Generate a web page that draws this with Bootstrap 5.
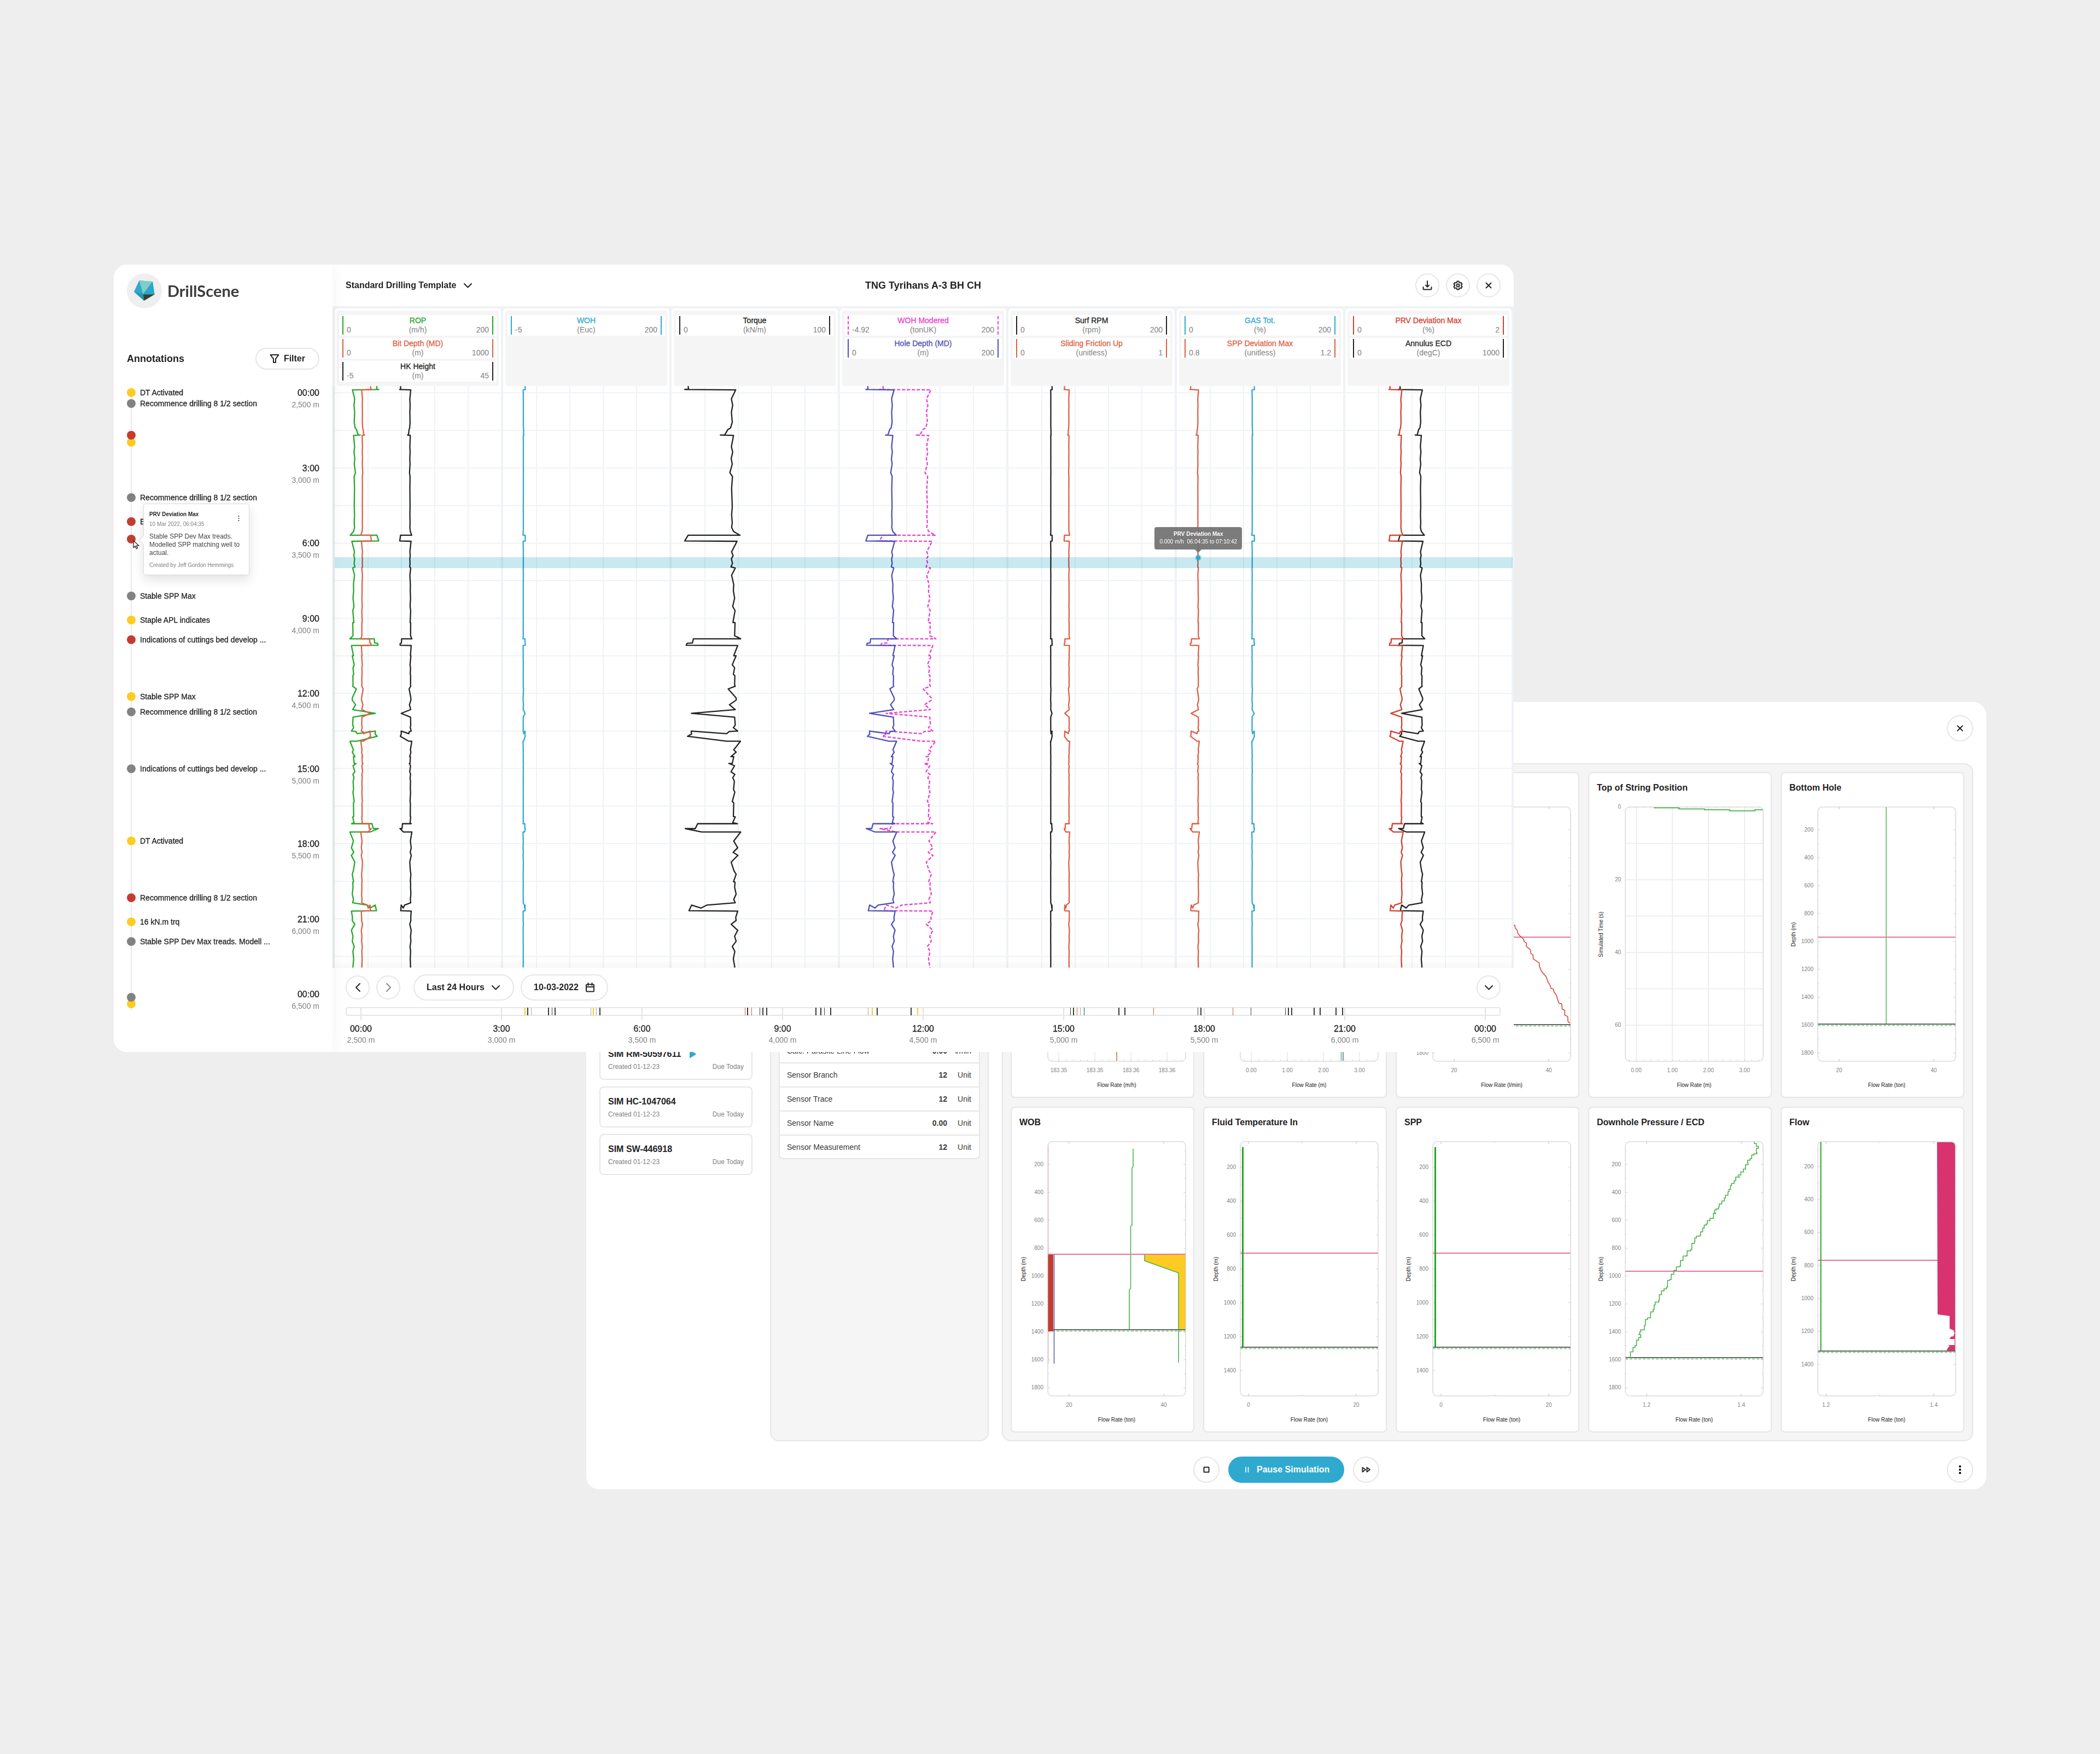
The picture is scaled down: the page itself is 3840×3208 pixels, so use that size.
<!DOCTYPE html>
<html lang="en">
<head>
<meta charset="utf-8">
<meta name="viewport" content="width=device-width, initial-scale=1">
<title>DrillScene</title>
<link href="https://cdn.jsdelivr.net/npm/bootstrap@5.3.0/dist/css/bootstrap.min.css" rel="stylesheet">
<style>
  :root { --ink:#222; --soft:#7f7f7f; --rule:#e6e6e6; --mesh:#eff3f6; --panel:#f5f5f5; --aqua:#30a9ce; --amber:#fdcb22; --brick:#c63b2f; }
  body { background:#eee; color:var(--ink); font-family:"Liberation Sans",Arial,sans-serif; font-size:14px; line-height:20px; }
  .desk { display:grid; grid-template-columns:208fr 864fr 1696fr 864fr 208fr; grid-template-rows:484px minmax(800px,auto) minmax(640px,auto) minmax(800px,auto) 484px; }
  .win { background:#fff; border-radius:24px; min-width:0; }
  .win-log { grid-area:2 / 2 / 4 / 4; z-index:2; overflow:hidden; }
  .win-sim { grid-area:3 / 3 / 5 / 5; z-index:1; padding:24px 24px 12px; }
  h1, h2, h3, p, ul { margin:0; padding:0; }
  .t16 { font-size:16px; line-height:22px; }
  .t18 { font-size:18px; line-height:24px; }
  .t12 { font-size:12px; line-height:15px; }
  .t10 { font-size:10px; line-height:14px; }
  .mid { -webkit-text-stroke:.3px currentColor; }
  .soft { color:var(--soft); }
  .round { width:44px; height:44px; padding:0; border:2px solid var(--rule); border-radius:50%; background:#fff; color:var(--ink); display:flex; align-items:center; justify-content:center; flex:none; }
  .round.big { width:48px; height:48px; }
  .round.off { color:#8c8c8c; }
  svg { display:block; flex:none; }
  .ln { fill:none; stroke:currentColor; stroke-width:2; stroke-linejoin:round; stroke-linecap:round; }

  /* sidebar */
  .side { width:400px; flex:none; padding:16px 24px 74px; z-index:2; background:#fff; box-shadow:0 0 24px rgba(0,0,0,.06); }
  .brand { font-family:Lato,sans-serif; font-weight:700; font-size:29px; line-height:36px; color:#3c3c3c; }
  .brand-row { margin-bottom:72px; gap:10px; }
  .side-head { margin-bottom:32px; }
  .pill { border:2px solid var(--rule); border-radius:24px; background:#fff; font-weight:700; color:var(--ink); }
  .filter-btn { height:40px; padding:0 24px; }
  .rail { flex:1 1 auto; }
  .rail::before { content:""; position:absolute; left:7px; top:0; bottom:2px; width:2px; background:#e7ebec; }
  .notes { list-style:none; }
  .notes li { position:absolute; left:0; display:flex; align-items:center; gap:8px; transform:translateY(-50%); white-space:nowrap; }
  .dot { width:16px; height:16px; border-radius:50%; flex:none; }
  .dot.y { background:var(--amber); } .dot.g { background:#828282; } .dot.r { background:var(--brick); }
  .note-card { position:absolute; left:30px; width:194px; height:131px; background:#fff; border:1px solid #d9d9d9; border-radius:4px; box-shadow:0 8px 20px rgba(0,0,0,.12); padding:12px 10px; z-index:3; }
  .note-card::before { content:""; position:absolute; left:-7px; top:60px; width:12px; height:12px; background:#fff; border-left:1px solid #d9d9d9; border-bottom:1px solid #d9d9d9; transform:rotate(45deg); }
  .note-card p { color:#444; }
  .note-card .dots { position:absolute; right:13px; top:16px; border:0; background:none; padding:4px; color:#555; }
  .cursor { position:absolute; left:11px; z-index:4; }

  /* log window */
  .log-col { min-width:0; }
  .log-head { height:76px; padding:0 24px; display:grid; grid-template-columns:1fr auto 1fr; align-items:center; }
  .tools { gap:12px; }
  .pick { position:relative; display:inline-flex; align-items:center; }
  .pick select { appearance:none; border:0; background:none; font-weight:700; font-size:16px; line-height:22px; color:var(--ink); padding:0 28px 0 0; outline:0; }
  .pick svg { position:absolute; right:0; pointer-events:none; }
  .tracks { background:var(--mesh); padding:4px 4px 0; gap:4px; }
  .track { flex:1 1 0; background:#fff; border-radius:6px 6px 0 0; padding:4px 4px 0; }
  .track-in { background:var(--panel); border-radius:4px; min-height:138px; padding:8px 4px; display:flex; flex-direction:column; gap:4px; }
  .curve { background:#fff; border-radius:2px; padding:2px 6px; }
  .curve-in { border:0 solid; border-width:0 2px; padding:0 6px; line-height:17px; text-align:center; }
  .curve-in.dash { border-style:dashed; }
  .curve-in span { flex:1 1 0; color:var(--soft); }
  .plot svg, .gauge svg { width:100%; height:auto; }
  .tip { position:absolute; left:73.3%; top:258px; width:160px; height:41px; transform:translateX(-50%); background:rgba(112,112,112,.92); border-radius:4px; color:#fff; text-align:center; padding:6px 0; white-space:pre; }
  .tip::after { content:""; position:absolute; left:74px; top:41px; border:6px solid transparent; border-top-color:#7a7a7a; border-bottom:0; }
  .ctl { flex:1 1 auto; padding:12px 24px; background:#fff; box-shadow:0 -4px 16px rgba(0,0,0,.05); z-index:1; }
  .ctl-row { gap:12px; }
  .ctl .pill { height:48px; padding:0 22px; }
  .ctl .pick.pill { width:184px; margin-left:12px; }
  .ctl .pick.pill svg { right:24px; }
  .day { width:86px; border:0; padding:0; font-weight:700; color:var(--ink); outline:0; }
  .strip { height:24px; margin-top:12px; }
  .strip-box { height:16px; border:2px solid var(--rule); border-radius:4px; position:absolute; left:0; right:0; top:0; }
  .ev { position:absolute; top:1px; width:2px; height:14px; }
  .ev.thin { width:1px; }
  .hour { width:56px; text-align:center; white-space:nowrap; }
  .hour i { display:block; width:2px; height:24px; background:#e1e3e4; margin:auto; }
  .hours { margin-top:6px; }

  /* simulation window */
  .sim-head { height:88px; }
  .sims { width:280px; flex:none; padding-top:504px; gap:12px; margin-right:32px; }
  .sim-card { border:2px solid var(--rule); border-radius:8px; padding:15px 14px 14px; }
  .sim-meta { padding-top:5px; }
  .box { background:var(--panel); border:2px solid var(--rule); border-radius:16px; }
  .sensors { width:400px; flex:none; padding:500px 14px 0; margin-right:24px; }
  .sensor-wrap { background:#fff; border:2px solid var(--rule); border-radius:8px; overflow:hidden; }
  .sensor-wrap table { width:100%; color:#3a3a3a; }
  .sensor-wrap td { height:44px; padding:0; border-bottom:2px solid var(--rule); }
  .sensor-wrap tr:last-child td { border-bottom:0; height:42px; }
  .sensor-wrap td:first-child { padding-left:13px; }
  .sensor-wrap td:nth-child(2) { font-weight:700; text-align:right; }
  .sensor-wrap td:last-child { width:58px; text-align:right; padding-right:14px; }
  .gauges { flex:1 1 auto; padding:14px; display:grid; grid-template-columns:repeat(5,1fr); gap:16px; }
  .gauge { background:#fff; border:2px solid var(--rule); border-radius:8px; min-width:0; }
  .gauge-top { height:42px; padding:15px 14px 0; font-weight:700; font-size:16px; line-height:24px; }
  .gauge text { font-size:10px; fill:var(--soft); }
  .gauge text.cap { fill:var(--ink); }
  .run { padding-top:28px; display:grid; grid-template-columns:1fr auto 1fr; align-items:center; }
  .pause { height:48px; min-width:212px; border:0; border-radius:24px; background:var(--aqua); color:#fff; font-weight:700; padding:0 24px; }
</style>
</head>
<body>
<main class="desk">

  <section class="win win-log d-flex" aria-label="Drilling log">
    <aside class="side d-flex flex-column position-relative">
      <div class="brand-row d-flex align-items-center">
        <svg width="64" height="64" viewBox="0 0 64 64">
          <circle cx="32" cy="32" r="32" fill="#efefef"/>
          <path d="M22.6 13 47 15l3.6 23.4L31.3 50 13 33.4z" fill="#30a9ce"/>
          <path d="M22.6 13 47 15 29.7 38z" fill="#80ccc6"/>
          <path d="M47 15 50.6 38.4 29.7 38z" fill="#2ba6cc"/>
          <path d="M13 33.4 29.7 38 31.3 50z" fill="#2296bb"/>
          <path d="M29.7 38.4H50.4L31.3 50z" fill="#3b3b3b"/>
          <path d="M31.2 49.6 29.7 38.4H50.4" fill="none" stroke="#2c8f3a"/>
        </svg>
        <span class="brand">DrillScene</span>
      </div>
      <div class="side-head d-flex align-items-center justify-content-between">
        <h2 class="t18 fw-bold">Annotations</h2>
        <button class="pill filter-btn t16 d-flex align-items-center gap-2" type="button">
          <svg width="18" height="18" viewBox="0 0 18 18"><path class="ln" d="M1.5 2h15L11 9.4V16H7V9.4z"/></svg>Filter
        </button>
      </div>
      <div class="rail position-relative">
        <ul class="notes" id="notes"></ul>
        <div class="d-flex flex-column justify-content-between h-100 text-end" id="railTimes"></div>
        <div class="note-card" style="top:18.65%">
          <div class="t10 fw-bold mb-0">PRV Deviation Max</div>
          <div class="t10 soft mt-1 mb-2">10 Mar 2022, 06:04:35</div>
          <p class="t12">Stable SPP Dev Max treads.<br>Modelled SPP matching well to<br>actual.</p>
          <div class="t10 soft mt-2">Created by Jeff Gordon Hemmings</div>
          <button class="dots" type="button" aria-label="More"><svg width="3" height="12" viewBox="0 0 3 12" fill="currentColor"><path d="M.5 1h2v2h-2zM.5 5h2v2h-2zM.5 9h2v2h-2z"/></svg></button>
        </div>
        <svg class="cursor" style="top:24.5%" width="13" height="17" viewBox="0 0 13 17"><path d="M1 1v12.500l3.200-2.600 2.200 4.600 2.200-1-2.200-4.400 4.400-.3z" fill="#fff" stroke="#333" stroke-width="1.400"/></svg>
      </div>
    </aside>

    <div class="log-col flex-fill d-flex flex-column">
      <header class="log-head">
        <div><span class="pick">
          <select id="tpl" aria-label="Template"><option>Standard Drilling Template</option></select>
          <svg width="15" height="9" viewBox="0 0 15 9"><path class="ln" d="m1 1 6.500 6.500L14 1"/></svg>
        </span></div>
        <h1 class="t18 fw-bold">TNG Tyrihans A-3 BH CH</h1>
        <div class="tools d-flex justify-content-end">
          <button class="round" type="button" aria-label="Download"><svg width="18" height="18" viewBox="0 0 18 18"><path class="ln" d="M9 1v10.500M5.800 8.600 9 11.800l3.200-3.200M1.500 12v3.200c0 .8.500 1.300 1.300 1.300h12.400c.8 0 1.300-.5 1.300-1.300V12"/></svg></button>
          <button class="round" type="button" aria-label="Settings"><svg width="18" height="18" viewBox="0 0 18 18"><path class="ln" d="M7.300 1.500h3.400l.6 2.200 1.400.8 2.200-.6 1.700 2.900L15 8.300v1.500l1.600 1.500-1.700 2.900-2.200-.6-1.400.8-.6 2.200H7.300l-.6-2.200-1.400-.8-2.200.6-1.700-2.900L3 9.800V8.300L1.400 6.800l1.700-2.900 2.200.6 1.400-.8z"/><circle class="ln" cx="9" cy="9" r="2.500"/></svg></button>
          <button class="round" type="button" aria-label="Close"><svg width="12" height="12" viewBox="0 0 12 12"><path class="ln" d="m1.500 1.500 9 9m0-9-9 9"/></svg></button>
        </div>
      </header>

      <div class="tracks d-flex" id="tracks"></div>

      <div class="plot position-relative">
        <svg id="log" viewBox="608 706 2160 1064"></svg>
        <div class="tip t10"><b>PRV Deviation Max</b>
0.000 m/h  06:04:35 to 07:10:42</div>
      </div>

      <footer class="ctl">
        <div class="ctl-row d-flex align-items-center">
          <button class="round" type="button" aria-label="Earlier"><svg width="9" height="16" viewBox="0 0 9 16"><path class="ln" d="M8 1 1 8l7 7"/></svg></button>
          <button class="round off" type="button" aria-label="Later"><svg width="9" height="16" viewBox="0 0 9 16"><path class="ln" d="m1 1 7 7-7 7"/></svg></button>
          <span class="pick pill">
            <select id="span" aria-label="Time span"><option>Last 24 Hours</option></select>
            <svg width="15" height="9" viewBox="0 0 15 9"><path class="ln" d="m1 1 6.500 6.500L14 1"/></svg>
          </span>
          <label class="pill d-flex align-items-center gap-2 t16">
            <input class="day" type="text" value="10-03-2022" aria-label="Date">
            <svg width="18" height="18" viewBox="0 0 18 18"><path class="ln" d="M3.500 3.500h11c.8 0 1.500.7 1.500 1.500v10c0 .8-.7 1.500-1.500 1.500h-11C2.700 16.500 2 15.800 2 15V5c0-.8.700-1.500 1.500-1.500zM2 8h14M5.500 1v4M12.500 1v4"/></svg>
          </label>
          <button class="round ms-auto" type="button" aria-label="Collapse"><svg width="15" height="9" viewBox="0 0 15 9"><path class="ln" d="m1 1 6.500 6.500L14 1"/></svg></button>
        </div>
        <div class="strip position-relative">
          <div class="d-flex justify-content-between" id="ticks"></div>
          <div class="strip-box"></div>
          <div id="events"></div>
        </div>
        <div class="hours d-flex justify-content-between" id="hours"></div>
      </footer>
    </div>
  </section>

  <section class="win win-sim d-flex flex-column" aria-label="Simulation">
    <header class="sim-head d-flex justify-content-end">
      <button class="round big" type="button" aria-label="Close simulation"><svg width="12" height="12" viewBox="0 0 12 12"><path class="ln" d="m1.500 1.500 9 9m0-9-9 9"/></svg></button>
    </header>
    <div class="d-flex flex-fill">
      <div class="sims d-flex flex-column" id="sims"></div>
      <div class="box sensors">
        <div class="sensor-wrap"><table><tbody>
          <tr><td>Calc. Parasite Line Flow</td><td>0.00</td><td>l/min</td></tr>
          <tr><td>Sensor Branch</td><td>12</td><td>Unit</td></tr>
          <tr><td>Sensor Trace</td><td>12</td><td>Unit</td></tr>
          <tr><td>Sensor Name</td><td>0.00</td><td>Unit</td></tr>
          <tr><td>Sensor Measurement</td><td>12</td><td>Unit</td></tr>
        </tbody></table></div>
      </div>
      <div class="box gauges" id="gauges"></div>
    </div>
    <footer class="run">
      <span></span>
      <div class="d-flex gap-3">
        <button class="round big" type="button" aria-label="Stop"><svg width="12" height="12" viewBox="0 0 12 12"><rect class="ln" x="1.500" y="1.500" width="9" height="9" rx=".5"/></svg></button>
        <button class="pause t16 d-flex align-items-center gap-2" type="button"><svg width="20" height="12" viewBox="0 0 20 12"><path d="M8 1v10M12.500 1v10" stroke="#fff" stroke-width="1.600"/></svg>Pause Simulation</button>
        <button class="round big" type="button" aria-label="Fast forward"><svg width="17" height="12" viewBox="0 0 17 12"><path class="ln" d="M1.500 2 7 6l-5.500 4zM9.500 2 15 6l-5.500 4z"/></svg></button>
      </div>
      <div class="d-flex justify-content-end"><button class="round big" type="button" aria-label="More actions"><svg width="4" height="16" viewBox="0 0 4 16"><circle cx="2" cy="2" r="2"/><circle cx="2" cy="8" r="2"/><circle cx="2" cy="14" r="2"/></svg></button></div>
    </footer>
  </section>
</main>

<script src="https://cdn.jsdelivr.net/npm/bootstrap@5.3.0/dist/js/bootstrap.bundle.min.js"></script>
<script>
const $ = id => document.getElementById(id);
const INK = '#222', GREEN = '#27a52a', ORANGE = '#dc5f45', AQUA = '#30a9ce', PINK = '#ea3fcb', BLUE = '#4f4fb8', RED = '#d0402f';

/* annotations, as pixels down a 1142px day */
const notes = [[10,'y','DT Activated'],[30,'g','Recommence drilling 8 1/2 section'],[101,'y',''],[88,'r',''],[202,'g','Recommence drilling 8 1/2 section'],
 [246,'r','E'],[278,'r',''],[382,'g','Stable SPP Max'],[426,'y','Staple APL indicates'],[462,'r','Indications of cuttings bed develop ...'],
 [566,'y','Stable SPP Max'],[594,'g','Recommence drilling 8 1/2 section'],[698,'g','Indications of cuttings bed develop ...'],[830,'y','DT Activated'],
 [934,'r','Recommence drilling 8 1/2 section'],[978,'y','16 kN.m trq'],[1014,'g','Stable SPP Dev Max treads. Modell ...'],[1128,'y',''],[1116,'g','']];
$('notes').innerHTML = notes.map(([p,c,t]) => `<li class="mid" style="top:${(p/11.42).toFixed(2)}%"><span class="dot ${c}"></span>${t}</li>`).join('');

const times = ['00:00','3:00','6:00','9:00','12:00','15:00','18:00','21:00','00:00'];
const depths = ['2,500 m','3,000 m','3,500 m','4,000 m','4,500 m','5,000 m','5,500 m','6,000 m','6,500 m'];
const slot = i => `<div class="t16 mid">${times[i]}</div><div class="soft">${depths[i]}</div>`;
$('railTimes').innerHTML = times.map((t,i) => `<div>${slot(i)}</div>`).join('');
$('hours').innerHTML = times.map((t,i) => `<div class="hour">${slot(i).replace('t16','fs-6 lh-sm')}</div>`).join('');
$('ticks').innerHTML = times.map(() => `<div class="hour"><i></i></div>`).join('');

/* event marks: offset along the 2112px strip, colour */
const ev = {'#3a3a3a':[332,370,382,464,734,762,769,859,868,886,971,1033,1330,1413,1424,1563,1723,1729,1770,1781,1810,1822],
 '#444':[377,757,875,1325,1350,1558,1655,1718],
 '#aaa':[339,448,458,955,1343], '#fdcb22':[327,452,962,1045], '#dc5f45':[730,742,1337,1477,1622]};
$('events').innerHTML = Object.entries(ev).flatMap(([c,a]) => a.map(x => `<span class="ev ${/3a|fd/.test(c)?'':'thin'}" style="left:${(x/21.12).toFixed(3)}%;background:${c}"></span>`)).join('');

/* track headers: name, unit, low, high, colour, dashed */
const heads = [
 [['ROP','(m/h)','0','200',GREEN],['Bit Depth (MD)','(m)','0','1000',ORANGE],['HK Height','(m)','-5','45',INK]],
 [['WOH','(Euc)','-5','200',AQUA]],
 [['Torque','(kN/m)','0','100',INK]],
 [['WOH Modered','(tonUK)','-4.92','200',PINK,1],['Hole Depth (MD)','(m)','0','200',BLUE]],
 [['Surf RPM','(rpm)','0','200',INK],['Sliding Friction Up','(unitless)','0','1',ORANGE]],
 [['GAS Tot.','(%)','0','200',AQUA],['SPP Deviation Max','(unitless)','0.8','1.2',ORANGE]],
 [['PRV Deviation Max','(%)','0','2',RED],['Annulus ECD','(degC)','0','1000',INK]]];
$('tracks').innerHTML = heads.map(t => `<div class="track"><div class="track-in">${t.map(([n,u,a,b,c,d]) =>
 `<div class="curve"><div class="curve-in ${d?'dash':''}" style="border-color:${c}"><div class="mid" style="color:${c}">${n}</div><div class="d-flex"><span class="text-start">${a}</span><span>${u}</span><span class="text-end">${b}</span></div></div></div>`).join('')}</div></div>`).join('');

/* one day of drilling: every curve follows the same profile on its own scale */
const run = [198,9,200,17,182,18,418,19,398,43,404,60,398,78,402,105,394,120,382,124,367,139,347,139,408,140,398,170,404,184,397,202,402,216,391,239,403,249,399,280,402,330,399,350,402,372,399,384,408,395,438,405,198,405,182,420,424,421,399,449,406,459,398,468,403,480,396,489,416,492,399,511,409,536,407,552,413,572,404,594,415,605,405,637,415,637,413,672,441,680,222,680,218,691,193,692,189,697,427,698,409,725,420,725,402,749,413,757,407,774,414,778,413,803,416,806,383,813,420,837,420,843,389,855,416,868,213,878,413,888,416,909,407,916,427,925,388,926,376,932,212,925,214,933,195,939,376,952,440,952,409,975,420,981,396,993,409,993,402,1011,386,1011,413,1017,396,1033,414,1040,404,1049,412,1058,408,1080,414,1087,402,1112,409,1116,407,1152,416,1153,404,1168,426,1171,242,1171,231,1184,185,1184,260,1193,441,1193,409,1217,427,1235,406,1247,428,1255,397,1273,410,1296,420,1305,408,1325,415,1326,413,1340,420,1358,409,1372,416,1381,285,1387,258,1395,214,1387,202,1402,427,1403,418,1420,420,1428,397,1438,427,1454,413,1470,420,1483,402,1497,414,1510,407,1530,414,1553];
const curve = (lo, hi, col, extra = '') => {
  let p = '';
  for (let i = 0; i < run.length; i += 2) p += (lo + (run[i]-182)/258*(hi-lo)).toFixed(1) + ',' + (700 + run[i+1]/1.4519).toFixed(1) + ' ';
  return `<polyline points="${p}" fill="none" stroke="${col}" stroke-width="2.300" stroke-linejoin="round" ${extra}/>`;
};
let g = '';
for (let k = 0; k < 16; k++) g += `<path d="M608 ${(718.6+k*68.7).toFixed(1)}h2160" stroke="#eff3f6" stroke-width="2"/>`;
for (let k = 0; k < 7; k++) for (let j = 0; j < 4; j++) g += `<path d="M${673+k*308+j*61} 706v1064" stroke="#eff3f6" stroke-width="2"/>`;
for (let k = 0; k < 8; k++) g += `<path d="M${610+k*308} 706v1064" stroke="${k?'#eff3f6':'#e8eced'}" stroke-width="4"/>`;
$('log').innerHTML = g
 + curve(692.5,640,GREEN) + curve(679,659.7,ORANGE) + curve(731,753,INK) + curve(960.6,956.3,AQUA)
 + curve(1252,1354,INK) + curve(1608,1711,PINK,'stroke-dasharray="6 3"') + curve(1583.3,1639.5,BLUE)
 + curve(1924,1921,INK) + curve(1945.8,1956,ORANGE) + curve(2176,2193,ORANGE) + curve(2294,2289,AQUA)
 + curve(2557,2605,INK) + curve(2540,2565.7,RED)
 + `<rect x="612" y="1019" width="2154" height="20" fill="#c9e9f1" style="mix-blend-mode:multiply"/>
    <circle cx="2191" cy="1020" r="6" fill="#30a9ce" fill-opacity=".35"/><circle cx="2191" cy="1020" r="4" fill="#30a9ce"/>`;

$('sims').innerHTML = [['SIM RM-50597611',1],['SIM HC-1047064'],['SIM SW-446918']].map(([n,p]) =>
 `<div class="sim-card"><div class="t16 fw-bold d-flex align-items-center gap-3">${n}${p?'<svg width="12" height="14" viewBox="0 0 12 14"><path d="M1 0 11 6q1.500 1 0 2L1 14q-1 0-1-1V1q0-1 1-1z" fill="#30a9ce"/></svg>':''}</div>
  <div class="sim-meta t12 soft d-flex justify-content-between"><span>Created 01-12-23</span><span>Due Today</span></div></div>`).join('');

/* charts, drawn in card coordinates: frame is 68..320 by 64..529 */
const L = (d, c, w = 1.5, x = '') => `<path d="${d}" fill="none" stroke="${c}" stroke-width="${w}" ${x}/>`;
const floor = y => L(`M68 ${y+2.500}H320`, '#8fd08f', 2, 'stroke-dasharray="5 3"') + L(`M68 ${y}H320`, '#666', 2);
const cross = (y, x = 320) => L(`M68 ${y}H${x}`, '#e8749f', 2);
const steps = (a, fx, fy) => { let d = ''; for (let i = 0; i < a.length; i += 2) { const x = fx(a[i]).toFixed(1), y = fy(a[i+1]).toFixed(1); d += i ? `V${y}H${x}` : `M${x} ${y}`; } return d; };
const line = (a, fx, fy) => { let d = 'M'; for (let i = 0; i < a.length; i += 2) d += `${fx(a[i]).toFixed(1)} ${fy(a[i+1]).toFixed(1)} `; return d; };
const ecd = [1089,334,1089,338,1093,339,1093,346,1097,348,1097,353,1093,355,1094,370,1088,374,1088,378,1084,378,1084,388,1081,390,1081,396,1076,396,1077,405,1072,411,1072,420,1068,426,1063,436,1063,443,1058,446,1058,453,1062,453,1053,453,1053,461,1050,466,1045,475,1043,482,1043,495,1040,495,1038,503,1033,515,1031,525,1026,535,1021,545,1020,555,1015,562,1012,566,1014,576,1010,578,1010,590,1003,594,998,602,996,613,992,617,989,627,985,640,984,651,977,655,974,661,973,673,968,680,966,700,959,705,958,722,951,723,951,737,946,738,944,758,938,760,933,772,928,785,925,803,921,806,919,829,914,835,909,842,905,855,904,873,897,880,895,890,893,905,888,914,888,925,882,934,878,940,876,960,869,975,867,982,864,991,869,991,865,1001,861,1010,858,1028,854,1035,849,1050,848,1070];
const rate = [113,870,117,872,118,882,124,890,126,902,133,912,138,917,144,925,145,932,152,938,152,951,164,963,166,978,172,983,173,998,191,1013,192,1027,197,1043,212,1065,218,1085,225,1099,227,1109,234,1112,236,1122,243,1134,247,1150,251,1165,260,1168,261,1187,269,1192,269,1210,278,1216,279,1235,285,1240];
const yA = {o:54.700, k:.2552, n:9}, yB = {o:48.700, k:.31, n:7}, yC = {o:49.400, k:.3015, n:7};
const x24 = [[107,'20'],[280,'40']], x02 = [[83,'0'],[280,'20']], m4 = [[88,'0.00'],[154,'1.00'],[220,'2.00'],[286,'3.00']];
const warm = L('M72.500 74V439', GREEN, 3);
const charts = [
 {x:[[88,'183.35'],[154,'183.35'],[220,'183.36'],[286,'183.36']], grid:1, cap:'Flow Rate (m/h)', art:L('M194 64V528', ORANGE)},
 {x:m4, grid:1, cap:'Flow Rate (m)', art:L('M252.500 64V528','#7ccb7c',2)+L('M256 64V528','#8a8ad0',2)},
 {y:yA, x:x24, cap:'Flow Rate (l/min)', art:cross(302)+floor(462)+L('M120 64 '+line(rate, v=>v/1.668+148, v=>v/2.063-142).replace('M','L'), RED)},
 {t:'Top of String Position', x:m4, grid:2, cap:'Flow Rate (m)', side:'Simulated Time (s)', art:L('M120 65.500H166V67.500H213V69H259V71H305V69H320', GREEN)},
 {t:'Bottom Hole', y:yA, x:x24, cap:'Flow Rate (ton)', side:'Depth (m)', art:L('M193 64V461','#4fb852')+cross(302)+floor(461)},
 {t:'WOB', y:yA, x:x24, cap:'Flow Rate (ton)', side:'Depth (m)', art:
   '<path d="M245 270V282L307 304V408H320V270z" fill="#fdcb22"/>'
   + L('M69 71V470','#f2a3c0',1)+floor(408)+'<path d="M68 270H78V411H68z" fill="#c63b2f"/>'+L('M79.500 270V470','#5c5ca8')
   + L('M224 77V110L222 112V217L219.500 219V333L217 335V408','#3fb043')+L('M245 270V282L307 304V468','#3fb043')+cross(270)},
 {t:'Fluid Temperature In', y:yB, x:x02, mx:181, cap:'Flow Rate (ton)', side:'Depth (m)', art:cross(268)+warm+floor(440)},
 {t:'SPP', y:yB, x:x02, mx:181, cap:'Flow Rate (ton)', side:'Depth (m)', art:cross(268)+warm+floor(440)},
 {t:'Downhole Pressure / ECD', y:yA, x:[[107,'1.2'],[280,'1.4']], cap:'Flow Rate (ton)', side:'Depth (m)', art:cross(301)+floor(459)+L(steps(ecd, v=>v/1.0595-724, v=>v/1.8667-114),'#3fb043')},
 {t:'Flow', y:yC, x:[[83,'1.2'],[280,'1.4']], mx:181, cap:'Flow Rate (ton)', side:'Depth (m)', art:cross(281,288)
   + '<path d="M286 65H312Q319 65 319 72V447H304V445L306 441L309 438L306 436H318V425H309L311 421L316 420L318 414L316 409L309 406V383L287 380z" fill="#d8336f"/>'
   + L('M73.500 64V447', GREEN, 2)+floor(447)}];
$('gauges').innerHTML = charts.map(c => {
  let s = '';
  if (c.grid) {
    c.x.forEach(([x]) => s += L(`M${x} 64V529`, '#e9e9e9'));
    for (let x = 75; x < 318; x += 13.200) s += L(`M${x.toFixed(1)} 526v3M${x.toFixed(1)} 64v2`, '#d4d4d4', 1);
  } else c.x.forEach(([x]) => s += L(`M${x} 64v4M${x} 529v-4`, '#d0d0d0'));
  if (c.mx) s += L(`M${c.mx} 64v2M${c.mx} 529v-2`, '#d0d0d0');
  if (c.grid === 2) for (let k = 1; k < 7; k++) s += L(`M68 ${(64+k*66.500).toFixed(1)}H320`, '#e9e9e9');
  if (c.grid === 2) for (let k = 0; k < 4; k++) s += `<text x="60" y="${64+k*133+3}" text-anchor="end">${k*20}</text>`;
  if (c.y) for (let v = 100; v <= c.y.n*200 + 50; v += 100) {
    const y = (c.y.o + v*c.y.k).toFixed(1), w = v % 200 ? 2 : 4;
    s += L(`M68 ${y}h${w}M320 ${y}h-${w}`, '#d0d0d0', 1);
    if (!(v % 200)) s += `<text x="60" y="${Math.round(y)+3}" text-anchor="end">${v}</text>`;
  }
  s += c.art + '<rect x="68" y="64" width="252" height="465" rx="8" fill="none" stroke="#c8c8c8" stroke-opacity=".5" stroke-width="2"/>';
  c.x.forEach(([x,t]) => s += `<text x="${x}" y="549" text-anchor="middle">${t}</text>`);
  s += `<text class="cap" x="194" y="576" text-anchor="middle">${c.cap}</text>`;
  if (c.side) s += `<text class="cap" transform="translate(27 297) rotate(-90)" text-anchor="middle">${c.side}</text>`;
  return `<article class="gauge">${c.t ? `<h3 class="gauge-top">${c.t}</h3>` : '<div class="gauge-top"></div>'}<svg viewBox="2 44 332 550">${s}</svg></article>`;
}).join('');
</script>
</body>
</html>
